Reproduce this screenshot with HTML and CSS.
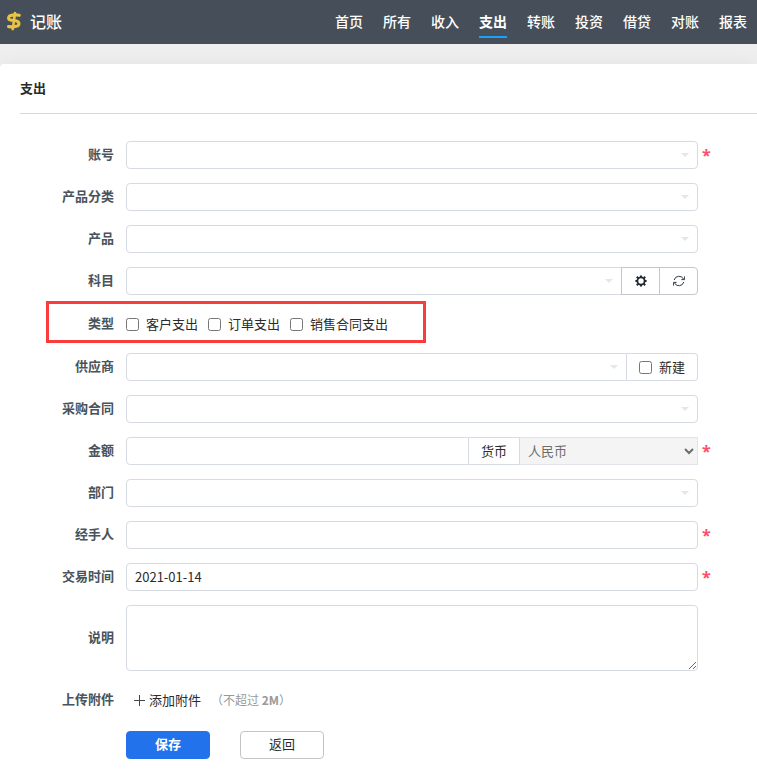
FILE: index.html
```html
<!DOCTYPE html>
<html lang="zh-CN">
<head>
<meta charset="utf-8" />
<meta name="viewport" content="width=device-width, initial-scale=1" />
<title>记账 - 支出</title>
<link rel="stylesheet" href="styles.css">
</head>
<body>
<header class="header">
  <a class="logo" href="#">
    <svg class="logo-icon" width="16" height="20" viewBox="0 0 16 20" fill="none" stroke="#e9c343" stroke-linecap="round" stroke-linejoin="round">
      <path d="M13.2 4.3C11 3.9 7 3.9 4.6 4.5C2.4 5.1 2.2 7.5 3.2 8.5C5 9.9 10 9.1 12 10.7C13.6 12.1 13 14.1 11.6 14.9C9.4 15.9 5 15.9 2.6 15.7" stroke-width="3.2"/>
      <path d="M9 2L6.8 18.2" stroke-width="2.6"/>
    </svg>
    <span>记账</span>
  </a>
  <nav class="nav">
    <a href="#">首页</a>
    <a href="#">所有</a>
    <a href="#">收入</a>
    <a href="#" class="active">支出</a>
    <a href="#">转账</a>
    <a href="#">投资</a>
    <a href="#">借贷</a>
    <a href="#">对账</a>
    <a href="#">报表</a>
  </nav>
</header>
<main class="panel">
  <h2 class="panel-title">支出</h2>
  <form class="form">
    <div class="row required">
      <label class="name" for="account">账号</label>
      <div class="field"><select class="control picker" id="account"><option></option></select></div>
    </div>
    <div class="row">
      <label class="name" for="category">产品分类</label>
      <div class="field"><select class="control picker" id="category"><option></option></select></div>
    </div>
    <div class="row">
      <label class="name" for="product">产品</label>
      <div class="field"><select class="control picker" id="product"><option></option></select></div>
    </div>
    <div class="row">
      <label class="name" for="subject">科目</label>
      <div class="field group">
        <select class="control picker" id="subject"><option></option></select>
        <button type="button" class="btn-icon" aria-label="设置">
          <svg width="12" height="12" viewBox="0 0 12 12" fill="none" stroke="#1f2933">
            <circle cx="6" cy="6" r="3.6" stroke-width="1.8"/>
            <path d="M6 .4V2M6 10V11.6M.4 6H2M10 6H11.6M1.8 1.8L3.2 3.2M8.8 8.8L10.2 10.2M1.8 10.2L3.2 8.8M8.8 3.2L10.2 1.8" stroke-width="2"/>
          </svg>
        </button>
        <button type="button" class="btn-icon" aria-label="刷新">
          <svg width="12" height="12" viewBox="0 0 12 12" fill="none" stroke="#333b44">
            <path d="M1.2 5A5 5 0 0 1 10.6 4.2M11.6 1.4V4.6H8.4M10.8 7A5 5 0 0 1 1.4 7.8M.4 10.6V7.4H3.6"/>
          </svg>
        </button>
      </div>
    </div>
    <div class="row row-type" role="group" aria-labelledby="type">
      <span class="name" id="type">类型</span>
      <div class="field checks">
        <label><input type="checkbox" />客户支出</label>
        <label><input type="checkbox" />订单支出</label>
        <label><input type="checkbox" />销售合同支出</label>
      </div>
    </div>
    <div class="row">
      <label class="name" for="supplier">供应商</label>
      <div class="field group">
        <select class="control picker" id="supplier"><option></option></select>
        <label class="addon addon-check"><input type="checkbox" />新建</label>
      </div>
    </div>
    <div class="row">
      <label class="name" for="contract">采购合同</label>
      <div class="field"><select class="control picker" id="contract"><option></option></select></div>
    </div>
    <div class="row required">
      <label class="name" for="money">金额</label>
      <div class="field group">
        <input type="text" class="control" id="money" />
        <label class="addon" for="currency">货币</label>
        <select class="control currency" id="currency" disabled><option>人民币</option></select>
      </div>
    </div>
    <div class="row">
      <label class="name" for="dept">部门</label>
      <div class="field"><select class="control picker" id="dept"><option></option></select></div>
    </div>
    <div class="row required">
      <label class="name" for="handler">经手人</label>
      <div class="field"><input type="text" class="control" id="handler" /></div>
    </div>
    <div class="row required">
      <label class="name" for="date">交易时间</label>
      <div class="field"><input type="text" class="control" id="date" value="2021-01-14" /></div>
    </div>
    <div class="row">
      <label class="name" for="desc">说明</label>
      <div class="field"><textarea class="control" id="desc"></textarea></div>
    </div>
    <div class="row row-file">
      <span class="name">上传附件</span>
      <div class="field files">
        <button type="button" class="btn-file">
          <svg width="12" height="12" viewBox="0 0 12 12" stroke="#444"><path d="M6.5 1V12M1 6.5H12"/></svg>
          添加附件
        </button>
        <span class="tip">（不超过 <b>2M</b>）</span>
      </div>
    </div>
    <div class="row">
      <div class="actions">
        <button type="submit" class="btn btn-primary">保存</button>
        <button type="button" class="btn">返回</button>
      </div>
    </div>
  </form>
</main>
</body>
</html>
```
FILE: styles.css
```css
*,*::before,*::after{
  box-sizing: border-box;
}
body{
  margin: 0;
  background: #efefef;
  color: #2b2b2b;
  font: 13px/20px "Noto Sans CJK SC", sans-serif;
}
input,select,textarea,button{
  margin: 0;
  font: inherit;
  color: inherit;
}
a{
  color: #fff;
  text-decoration: none;
}

/* 顶部导航 */
.header{
  display: flex;
  justify-content: space-between;
  height: 44px;
  padding: 0 10px 0 6px;
  background: #464f59;
}
.logo{
  display: flex;
  align-items: center;
  gap: 8px;
  padding-bottom: 3px;
  font-size: 16px;
  font-weight: 500;
}
.nav{
  display: flex;
  gap: 20px;
  font-size: 14px;
  font-weight: 500;
}
.nav a{
  height: 38px;
  padding-top: 11px;
  white-space: nowrap;
}
.nav .active{
  font-weight: 700;
  border-bottom: 2px solid #1a9ffb;
}

/* 内容面板 */
.panel{
  margin-top: 20px;
  padding-left: 20px;
  padding-bottom: 18px;
  background: #fff;
  border-radius: 4px 0 0 0;
  box-shadow: 0 0 20px rgba(0,0,0,.06);
}
.panel-title{
  margin: 0;
  padding: 14px 0 15px;
  border-bottom: 1px solid #d6d8e0;
  font-size: 13px;
  font-weight: 700;
}

/* 表单 */
.form{
  display: flex;
  flex-direction: column;
  gap: 14px;
  padding: 27px 59px 0 0;
}
.row{
  display: grid;
  grid-template-columns: 94px 1fr;
  column-gap: 12px;
  align-items: center;
  position: relative;
}
.name{
  padding-bottom: 2px;
  color: #49535b;
  font-weight: 700;
  text-align: right;
}
.required::after{
  content: "*";
  position: absolute;
  left: 100%;
  top: 4px;
  margin-left: 4px;
  color: #ff4c6c;
  font-family: "Noto Sans", sans-serif;
  font-size: 16px;
  font-weight: 700;
}
.field{
  display: flex;
  min-width: 0;
}
.control{
  flex: 1;
  min-width: 0;
  height: 28px;
  padding: 0 8px 2px;
  border: 1px solid #d6dae3;
  border-radius: 4px;
  background: #fff;
}
.picker{
  appearance: none;
  background: #fff url("data:image/svg+xml,%3Csvg xmlns='http://www.w3.org/2000/svg' width='8' height='4'%3E%3Cpath d='M0 0H8L4 4Z' fill='%23e3e6ea'/%3E%3C/svg%3E") no-repeat right 8px center;
}
textarea.control{
  height: 66px;
  padding: 4px 8px;
}
.group .control:first-child{
  border-radius: 4px 0 0 4px;
}
.btn-icon{
  display: flex;
  align-items: center;
  justify-content: center;
  width: 39px;
  height: 28px;
  margin-left: -1px;
  padding: 0;
  border: 1px solid #c4c6cb;
  background: #fff;
}
.btn-icon:last-child{
  border-radius: 0 4px 4px 0;
}
.addon{
  display: flex;
  align-items: center;
  height: 28px;
  padding: 0 12px;
  border: 1px solid #d6dae3;
  border-left: 0;
}
.addon-check{
  gap: 7px;
  border-radius: 0 4px 4px 0;
}
.currency{
  flex: 0 1 178px;
  padding: 0 4px 2px;
  border-left: 0;
  border-color: #e1e4ea;
  border-radius: 0;
  background: #f4f4f4;
  color: #6d6d6d;
  opacity: 1;
}

/* 类型 */
.row-type{
  height: 30px;
}
.row-type::before{
  content: "";
  position: absolute;
  top: -8px;
  left: 26px;
  width: 380px;
  height: 42px;
  border: 3px solid #fa3c3c;
  pointer-events: none;
}
.checks{
  gap: 10px;
}
.checks label{
  display: flex;
  align-items: center;
  gap: 7px;
}

/* 附件 */
.row-file{
  height: 32px;
  padding-bottom: 2px;
}
.files{
  align-items: center;
  gap: 10px;
}
.btn-file{
  display: flex;
  align-items: center;
  gap: 4px;
  padding: 0 0 0 7px;
  border: 0;
  background: none;
}
.tip{
  color: #999;
  font-size: 12px;
}

.actions{
  grid-column: 2;
  display: flex;
  gap: 30px;
}
.btn{
  width: 84px;
  height: 28px;
  padding: 0 0 2px;
  border: 1px solid #c4c4c4;
  border-radius: 4px;
  background: #fff;
}
.btn-primary{
  border-color: #2272eb;
  background: #2272eb;
  color: #fff;
  font-weight: 700;
}
```
